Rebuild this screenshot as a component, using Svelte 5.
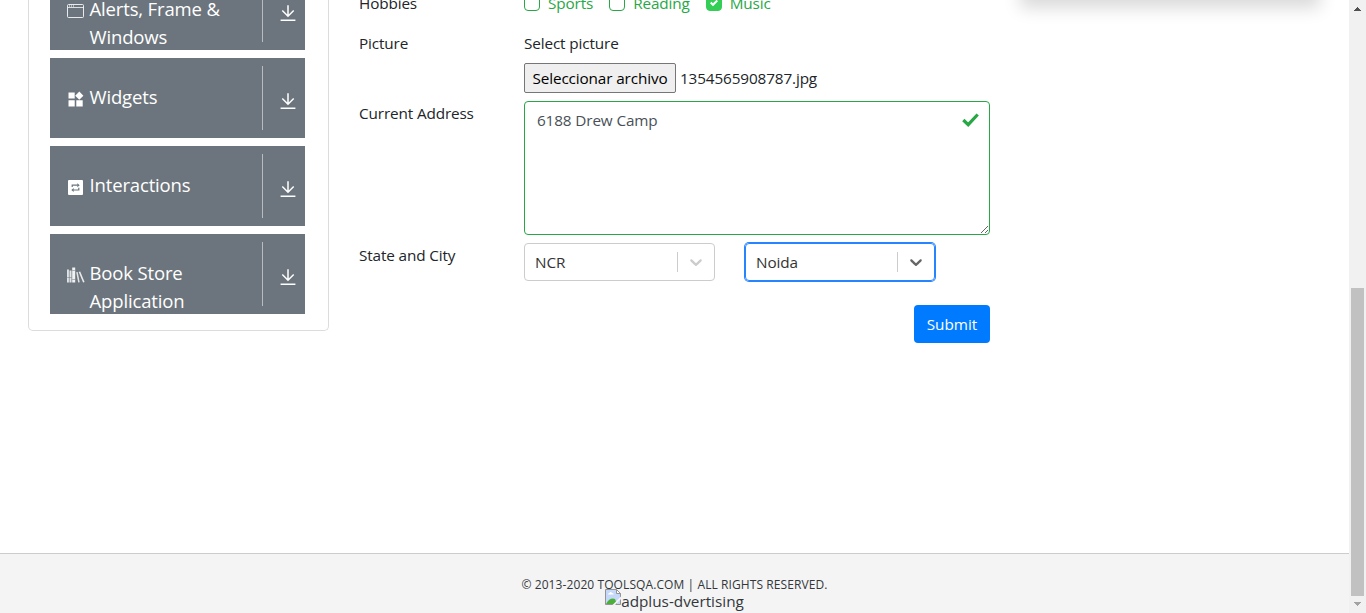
<script>
  const groups = [
    { icon: 'window', label: 'Alerts, Frame & Windows' },
    { icon: 'widgets', label: 'Widgets' },
    { icon: 'loop', label: 'Interactions' },
    { icon: 'books', label: 'Book Store Application' }
  ];
  const hobbies = [
    { label: 'Sports', checked: false },
    { label: 'Reading', checked: false },
    { label: 'Music', checked: true }
  ];
  const selects = [
    { value: 'NCR', focused: false },
    { value: 'Noida', focused: true }
  ];
</script>

<div class="viewport">
  <div class="page">
    <main>
      <nav class="sidebar">
        {#each groups as group}
          <div class="group">
            <div class="title">
              <span class="icon">
                {#if group.icon === 'window'}
                  <svg width="18" height="18" viewBox="0 0 18 18" fill="none" stroke="#fff"><rect x=".5" y="2.5" width="16" height="13" rx="1" stroke-opacity=".85" /><path d="M1 5.500h15.500" stroke-opacity=".75" /><path d="M2 4h6" stroke-dasharray="1 1" /></svg>
                {:else if group.icon === 'widgets'}
                  <svg width="18" height="18" viewBox="0 0 18 18" fill="#fff"><path d="M1.500 2.500h6.200v6H1.500zM1.500 10.200h6.200v6.300H1.500zM9.300 10.200h6.400v6.300H9.300zM12.300 1.600l4.100 4.100-4.100 4.100-4.100-4.100z" /></svg>
                {:else if group.icon === 'loop'}
                  <svg width="18" height="18" viewBox="0 0 18 18"><rect x="1" y="2" width="15" height="15" rx="1" fill="#fff" /><path d="M5.200 9V7.200h5.500M11.800 9.800v2.200H6.300" fill="none" stroke="#6c757d" stroke-width="1.200" /><path d="M10.300 5.200 12.700 7.200l-2.400 2zM6.700 10 4.300 12l2.400 2z" fill="#6c757d" /></svg>
                {:else}
                  <svg width="18" height="18" viewBox="0 0 18 18" fill="#fff"><path d="M.2 3.500h1.500v13H.2z" /><path d="M2.500 4.500h2v12h-2z" opacity=".8" /><path d="M5.200 1.500h3v15h-3z" opacity=".9" /><path d="M.2 11h4.300v1H.2zM5.200 4h3v1h-3zM5.200 13h3v1h-3z" fill="#6c757d" opacity=".5" /><path d="m9.200 6.200 1.500-.3 2 10.300-1.500.4z" opacity=".8" /><path d="m11.700 6 1.500-.6 4.400 10.500-1.500.7z" opacity=".85" /></svg>
                {/if}
              </span>
              <span class="label">{group.label}</span>
            </div>
            <span class="toggle">
              <svg width="18" height="18" viewBox="0 0 18 18" fill="none" stroke="#fff" stroke-width="1.5"><path d="M9 1.200V11.500M3.300 6.500 9 12.200 14.700 6.500M1.600 16.200h14.800" /></svg>
            </span>
          </div>
        {/each}
      </nav>

      <form onsubmit={(e) => e.preventDefault()}>
        <div class="row hobbies">
          <span>Hobbies</span>
          <div class="checks">
            {#each hobbies as hobby}
              <span class="check">
                <span class="box" class:checked={hobby.checked}>
                  {#if hobby.checked}
                    <svg width="8" height="8" viewBox="0 0 8 8" fill="#fff"><path d="M6.564.75l-3.590 3.612-1.538-1.550L0 4.260 2.974 7.250 8 2.193z" /></svg>
                  {/if}
                </span>
                {hobby.label}
              </span>
            {/each}
          </div>
        </div>
        <div class="row picture">
          <span>Picture</span>
          <div>
            <div>Select picture</div>
            <div class="file"><button type="button">Seleccionar archivo</button><span>1354565908787.jpg</span></div>
          </div>
        </div>
        <div class="row address">
          <span>Current Address</span>
          <div class="area">
            <textarea spellcheck="false">6188 Drew Camp</textarea>
            <svg class="valid" width="17" height="14" viewBox="0 0 17 14" fill="none" stroke="#28a745" stroke-width="3.200"><path d="M1.300 7 6.200 11.700 15.700 1.500" /></svg>
          </div>
        </div>
        <div class="row state">
          <span>State and City</span>
          <div class="selects">
            {#each selects as s}
              <div class="select" class:focused={s.focused}>
                <span class="value">{s.value}</span>
                <span class="arrow"><svg width="20" height="20" viewBox="0 0 20 20" fill="currentColor"><path d="M4.516 7.548c0.436-0.446 1.043-0.481 1.576 0l3.908 3.747 3.908-3.747c0.533-0.481 1.141-0.446 1.574 0 0.436 0.445 0.408 1.197 0 1.615-0.406 0.418-4.695 4.502-4.695 4.502-0.217 0.223-0.502 0.335-0.787 0.335s-0.570-0.112-0.789-0.335c0 0-4.287-4.084-4.695-4.502s-0.436-1.170 0-1.615z" /></svg></span>
              </div>
            {/each}
          </div>
        </div>
        <button class="submit">Submit</button>
      </form>
      <aside></aside>
    </main>
    <footer>
      <div class="copy">© 2013-2020 TOOLSQA.COM | ALL RIGHTS RESERVED.</div>
      <div class="broken">
        <svg width="16" height="16" viewBox="0 0 16 16"><path d="M.5.500h11l4 4v11H.5z" fill="#c6d8fa" stroke="#949494" /><path d="M11.500.500v4h4z" fill="#fff" stroke="#949494" /><path d="M3 5.500q0-1.500 1.500-1.500Q5.500 2 7 4q2 0 1.500 1.500z" fill="#fff" /><path d="M1 15q4-7 9-5l2 5z" fill="#4caf3a" /><path d="M16 7.500V10l-6 6H7.500z" fill="#f4f4f4" /></svg>
        <span>adplus-dvertising</span>
      </div>
    </footer>
  </div>
  <div class="scrollbar">
    <svg width="7" height="4" viewBox="0 0 7 4" shape-rendering="crispEdges"><path d="M3 0h1v1h1v1h1v1h1v1H0V3h1V2h1V1h1z" fill="#505050" /></svg>
    <div class="thumb"></div>
    <svg width="7" height="4" viewBox="0 0 7 4" shape-rendering="crispEdges"><path d="M0 0h7v1H6v1H5v1H4v1H3V3H2V2H1V1H0z" fill="#a3a3a3" /></svg>
  </div>
</div>

<style>
  :global(body) { margin: 0; overflow: hidden; }
  .viewport, .viewport * { box-sizing: border-box; }
  .viewport {
    display: flex; width: 1366px; height: 613px; overflow: hidden; background: #fff;
    font-family: "Open Sans", "Noto Sans", sans-serif; font-size: 15.3px; line-height: 24px;
    letter-spacing: -0.13px; color: #212529;
  }
  .page { width: 1349px; display: flex; flex-direction: column; }
  main { height: 553px; display: flex; align-items: flex-start; }
  .sidebar {
    width: 301px; height: 331px; margin-left: 28px; padding: 0 23px 16px 21px;
    border: 1px solid #dcdcdc; border-top: 0; border-radius: 0 0 5px 5px;
    display: flex; flex-direction: column; justify-content: flex-end; gap: 8px;
  }
  .group {
    height: 80px; flex: none; display: flex; overflow: hidden; background: #6c757d; color: #fff;
  }
  .title { width: 213px; margin: 8px 0; height: 64px; border-right: 1px solid #b9bbbd; display: flex; padding: 17px 30px 0 17px; }
  .icon { width: 18px; flex: none; margin-right: 4.500px; padding-top: 7px; line-height: 0; }
  .label { font-size: 18.500px; line-height: 28px; letter-spacing: -0.15px; }
  .toggle { width: 42px; display: flex; justify-content: center; padding: 34px 0 0 7px; }
  form { width: 631px; height: 343px; margin-left: 30px; display: flex; flex-direction: column; }
  .row { display: grid; grid-template-columns: 165px 466px; flex: none; }
  .hobbies { height: 40px; margin-top: -9px; }
  .checks { display: flex; color: #28a745; gap: 16px; }
  .check { display: flex; gap: 8px; }
  .box { width: 16px; height: 16px; margin-top: 4px; border: 1px solid #28a745; border-radius: 4px; display: flex; align-items: center; justify-content: center; }
  .box.checked { background: #34ce57; border-color: #34ce57; }
  .picture { height: 70px; }
  .file { display: flex; margin-top: 8px; height: 30px; align-items: center; gap: 4px; }
  .file button { width: 152px; height: 30px; border: 1px solid #767676; border-radius: 2px; background: #efefef; font: inherit; letter-spacing: inherit; padding: 0; color: #000; white-space: nowrap; }
  .address { height: 142px; }
  .area { height: 134px; position: relative; }
  textarea {
    display: block; width: 466px; height: 134px; border: 1px solid #28a745; border-radius: 4px;
    padding: 6px 12px; font: inherit; letter-spacing: inherit; color: #495057; resize: both; outline: 0; background: #fff;
  }
  .valid { position: absolute; right: 11px; top: 12px; }
  .state { height: 62px; }
  .selects { display: flex; align-items: flex-start; gap: 29px; }
  .select { width: 191px; height: 38px; border: 1px solid #ccc; border-radius: 4px; display: flex; align-items: center; padding-left: 10px; color: #ccc; }
  .select.focused { border-color: #2684ff; box-shadow: 0 0 0 1px #2684ff; color: #666; margin-left: 1px; width: 190px; }
  .value { flex: 1; color: #333; }
  .arrow { height: 20px; width: 37px; padding-left: 8px; border-left: 1px solid #ccc; line-height: 0; }
  .submit { align-self: flex-end; flex: none; width: 76px; height: 38px; border: 0; border-radius: 4px; background: #007bff; color: #fff; font: inherit; letter-spacing: 0; padding: 0; }
  aside { width: 300px; height: 100px; margin: -100px 0 0 30px; box-shadow: 0 8px 16px rgba(0, 0, 0, .15); }
  footer { height: 60px; border-top: 1px solid #ccc; background: #f4f4f4; text-align: center; padding-top: 22px; }
  .copy { font-size: 12px; line-height: 18px; height: 13px; letter-spacing: 0.09px; color: #33373b; }
  .broken { display: flex; justify-content: center; align-items: flex-start; letter-spacing: 0; }
  .broken span { line-height: 24px; color: #33373b; }
  .scrollbar { width: 17px; background: #f1f1f1; display: flex; flex-direction: column; align-items: center; padding: 7px 0 6px; }
  .thumb { width: 13px; height: 308px; margin: 277px 0 6px; background: #c1c1c1; flex: none; }
  .scrollbar svg { flex: none; }
</style>
